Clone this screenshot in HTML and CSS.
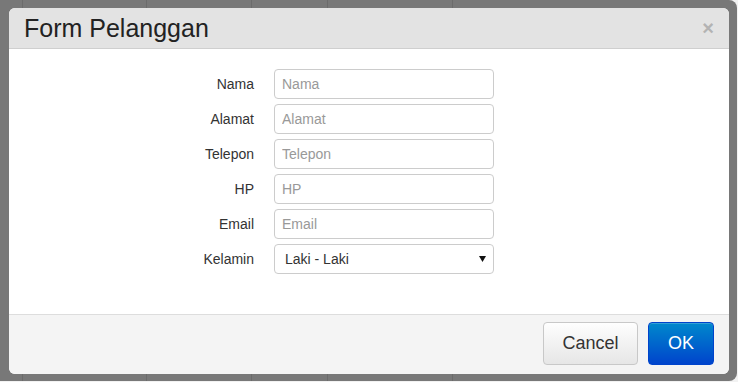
FILE: index.html
```html
<!DOCTYPE html>
<html lang="id">
<head>
    <meta charset="UTF-8">
    <meta name="viewport" content="width=device-width, initial-scale=1.0">
    <title>Form Pelanggan</title>
    <link rel="stylesheet" href="styles.css">
</head>
<body>
    <div class="backdrop">
        <div class="modal">
            <div class="modal-header">
                <h3>Form Pelanggan</h3>
                <span class="close">&times;</span>
            </div>

            <form class="modal-body">
                <label for="nama">Nama</label>
                <input id="nama" type="text" placeholder="Nama">

                <label for="alamat">Alamat</label>
                <input id="alamat" type="text" placeholder="Alamat">

                <label for="telepon">Telepon</label>
                <input id="telepon" type="text" placeholder="Telepon">

                <label for="hp">HP</label>
                <input id="hp" type="text" placeholder="HP">

                <label for="email">Email</label>
                <input id="email" type="text" placeholder="Email">

                <label for="kelamin">Kelamin</label>
                <div class="select-wrap">
                    <select id="kelamin">
                        <option>Laki - Laki</option>
                        <option>Perempuan</option>
                    </select>
                    <svg class="caret" width="7" height="6" viewBox="0 0 7 6"><path d="M0 0H7L3.5 6Z" fill="#111"/></svg>
                </div>
            </form>

            <div class="modal-footer">
                <button class="btn">Cancel</button>
                <button class="btn btn-primary">OK</button>
            </div>
        </div>
    </div>
</body>
</html>
```

FILE: styles.css
```css
body {
    margin: 0;
    background-color: #f2f2f2;
    font-family: 'Liberation Sans', Arial, sans-serif;
}

/* gelap di belakang dialog, garis tabel halaman masih terlihat */
.backdrop {
    width: 737px;
    height: 381px;
    box-sizing: border-box;
    padding: 8px 8px 7px 9px;
    background-color: #787878;
    background-image:
        linear-gradient(90deg, transparent 22px, #6b6b6b 22px, #6b6b6b 23px, transparent 23px),
        linear-gradient(90deg, transparent 146px, #6b6b6b 146px, #6b6b6b 147px, transparent 147px),
        linear-gradient(90deg, transparent 251px, #6b6b6b 251px, #6b6b6b 252px, transparent 252px),
        linear-gradient(90deg, transparent 327px, #6b6b6b 327px, #6b6b6b 328px, transparent 328px),
        linear-gradient(90deg, transparent 452px, #6b6b6b 452px, #6b6b6b 453px, transparent 453px);
    border-radius: 0 8px 8px 0;
}

.modal {
    width: 720px;
    height: 366px;
    background-color: #fff;
    border-radius: 6px;
    overflow: hidden;
    display: flex;
    flex-direction: column;
}

.modal-header {
    height: 40px;
    background-color: #e3e3e3;
    border-bottom: 1px solid #cfcfcf;
    display: flex;
    align-items: center;
    justify-content: space-between;
    padding: 0 15px 0 15px;
}
.modal-header h3 {
    margin: 0;
    font-size: 25px;
    font-weight: normal;
    color: #222;
}
.close {
    font-size: 20px;
    font-weight: bold;
    color: #b3b3b3;
    margin-top: 1px;
}

.modal-body {
    flex: 1;
    margin: 0;
    padding-top: 20px;
    display: grid;
    grid-template-columns: 245px 220px;
    grid-auto-rows: 30px;
    column-gap: 20px;
    row-gap: 5px;
    align-content: start;
}
.modal-body label {
    text-align: right;
    font-size: 14px;
    color: #333;
    line-height: 30px;
}
.modal-body input,
.modal-body select {
    width: 100%;
    height: 30px;
    box-sizing: border-box;
    margin: 0;
    border: 1px solid #ccc;
    border-radius: 4px;
    font-family: inherit;
    font-size: 14px;
    color: #333;
    background-color: #fff;
    outline: none;
}
.modal-body input {
    padding: 0 7px;
}
.modal-body input::placeholder {
    color: #999;
}

.select-wrap {
    position: relative;
}
.modal-body select {
    appearance: none;
    -webkit-appearance: none;
    padding: 0 10px;
}
.caret {
    position: absolute;
    right: 8px;
    top: 12px;
}

.modal-footer {
    height: 60px;
    box-sizing: border-box;
    border-top: 1px solid #ddd;
    background-color: #f4f4f4;
    display: flex;
    justify-content: flex-end;
    align-items: flex-start;
    gap: 10px;
    padding: 7px 15px 0 0;
}
.btn {
    width: 95px;
    height: 43px;
    padding: 0;
    font-family: inherit;
    font-size: 18px;
    color: #333;
    border: 1px solid #c8c8c8;
    border-radius: 4px;
    background: linear-gradient(#fefefe, #e6e6e6);
    box-shadow: inset 0 1px 0 rgba(255, 255, 255, 0.2);
}
.btn-primary {
    width: 66px;
    color: #fff;
    border-color: #0044cc;
    background: linear-gradient(#0088cc, #0044cc);
}
```
